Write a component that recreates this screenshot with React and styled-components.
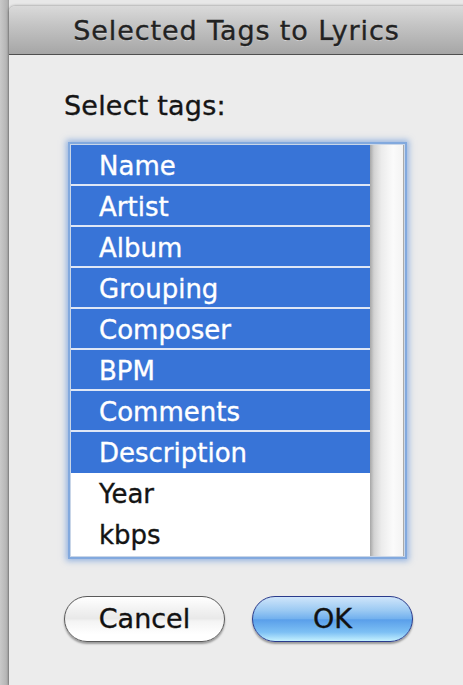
import React from "react";
import styled, { createGlobalStyle } from "styled-components";

const tags = [
  { name: "Name", selected: true },
  { name: "Artist", selected: true },
  { name: "Album", selected: true },
  { name: "Grouping", selected: true },
  { name: "Composer", selected: true },
  { name: "BPM", selected: true },
  { name: "Comments", selected: true },
  { name: "Description", selected: true },
  { name: "Year", selected: false },
  { name: "kbps", selected: false },
];

export default function App() {
  return (
    <>
      <GlobalStyle />
      <Screen>
        <Sheet>
          <TitleBar>Selected Tags to Lyrics</TitleBar>
          <Body>
            <Label>Select tags:</Label>
            <ListFrame>
              <Rows>
                {tags.map((t, i) => (
                  <Row
                    key={t.name}
                    selected={t.selected}
                    divider={t.selected && tags[i + 1] && tags[i + 1].selected}
                  >
                    {t.name}
                  </Row>
                ))}
              </Rows>
              <Scrollbar />
            </ListFrame>
            <Buttons>
              <PillButton>Cancel</PillButton>
              <PillButton primary>OK</PillButton>
            </Buttons>
          </Body>
        </Sheet>
      </Screen>
    </>
  );
}

const GlobalStyle = createGlobalStyle`
  html, body {
    margin: 0;
    padding: 0;
    background: #e6e6e6;
    overflow: hidden;
  }
  body {
    font-family: "DejaVu Sans", "Liberation Sans", sans-serif;
    -webkit-text-stroke: 0.35px currentColor;
  }
`;

const Screen = styled.div`
  width: 463px;
  height: 685px;
  padding: 6px 0 0 9px;
  box-sizing: border-box;
  display: flex;
  overflow: hidden;
  background: linear-gradient(90deg, #c9c9c9 0%, #b3b3b3 80%, #9a9a9a 100%) left / 9px 100% no-repeat,
    #e8e8e8;
`;

const Sheet = styled.div`
  flex: 0 0 480px;
  display: flex;
  flex-direction: column;
  background: #ececec;
  border-radius: 6px 6px 0 0;
  box-shadow: 0 0 3px rgba(0, 0, 0, 0.45);
  overflow: hidden;
`;

const TitleBar = styled.div`
  height: 49px;
  box-sizing: border-box;
  border-bottom: 1px solid #4f4f4f;
  background: linear-gradient(#dadada 0%, #c4c4c4 40%, #a6a6a6 100%);
  color: #222;
  font-size: 27px;
  line-height: 50px;
  padding-right: 25px;
  text-align: center;
  text-shadow: 0 1px 0 rgba(255, 255, 255, 0.45);
  letter-spacing: 0.9px;
`;

const Body = styled.div`
  flex: 1;
  padding: 35px 0 0 55px;
  display: flex;
  flex-direction: column;
  align-items: flex-start;
`;

const Label = styled.div`
  font-size: 27px;
  line-height: 32px;
  color: #151515;
  letter-spacing: 0.2px;
`;

const ListFrame = styled.div`
  margin: 23px 0 0 7px;
  width: 333px;
  height: 411px;
  display: flex;
  background: #fff;
  box-shadow: 0 0 0 1px #c9d6e8, 0 0 0 3px #82a9de, 0 0 6px 5px rgba(105, 150, 218, 0.65);
`;

const Rows = styled.div`
  flex: 0 0 299px;
  display: flex;
  flex-direction: column;
`;

const Row = styled.div`
  height: 41px;
  box-sizing: border-box;
  padding: 3px 0 0 28px;
  border-bottom: ${(p) => (p.divider ? "2px solid #dfe7f6" : "none")};
  background: ${(p) => (p.selected ? "#3874d7" : "#fff")};
  color: ${(p) => (p.selected ? "#fff" : "#141414")};
  font-size: 26px;
  line-height: 36px;
  white-space: nowrap;
`;

const Scrollbar = styled.div`
  flex: 1;
  box-sizing: border-box;
  border-right: 1px solid #a9a9a9;
  background: linear-gradient(90deg, #a6a6a6 0%, #d2d2d2 12%, #ececec 35%, #fbfbfb 70%, #f3f3f3 100%);
`;

const Buttons = styled.div`
  margin-top: 40px;
  display: flex;
  gap: 27px;
`;

const PillButton = styled.button`
  width: 161px;
  height: 46px;
  border-radius: 23px;
  font-family: inherit;
  font-size: 27px;
  color: #111;
  padding: 0 0 2px;
  cursor: default;
  -webkit-text-stroke: 0.35px #111;
  border: 1.5px solid ${(p) => (p.primary ? "#2a3b8c" : "#5a5a5a")};
  background: ${(p) =>
    p.primary
      ? "linear-gradient(#cfe5fa 0%, #9ccaf3 30%, #73b1ee 49%, #5a9fea 52%, #7dc0f4 80%, #c4f1ff 100%)"
      : "linear-gradient(#ffffff 0%, #f1f1f1 30%, #e9e9e9 49%, #f4f4f4 55%, #ffffff 85%, #ffffff 100%)"};
  box-shadow: 0 2px 2px rgba(0, 0, 0, 0.35);
`;
